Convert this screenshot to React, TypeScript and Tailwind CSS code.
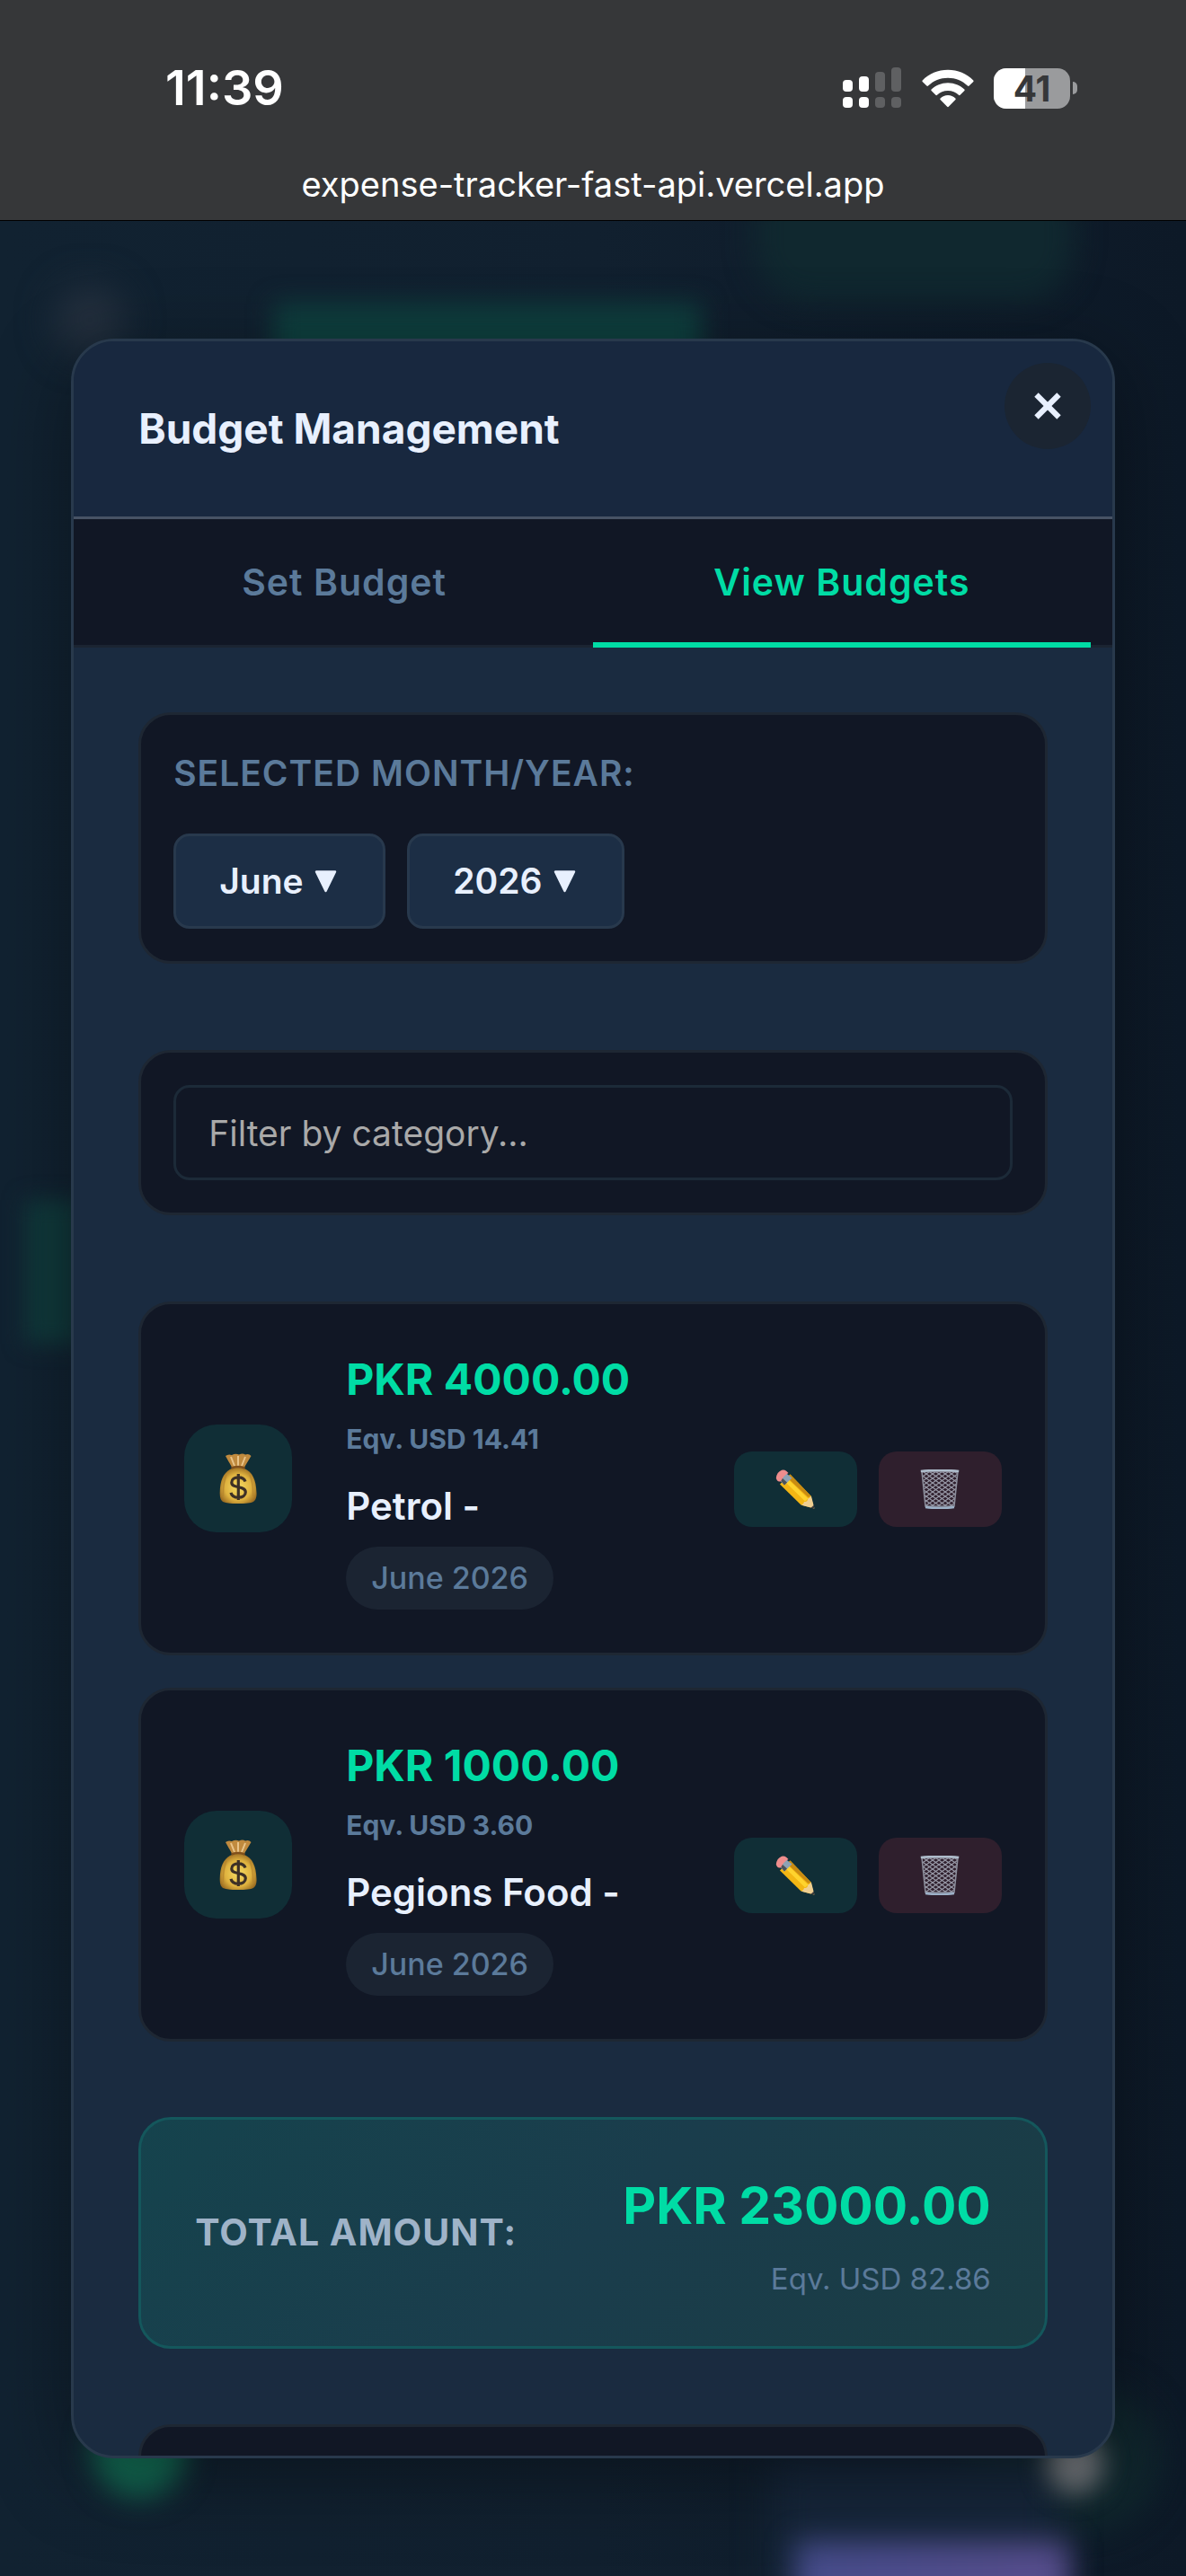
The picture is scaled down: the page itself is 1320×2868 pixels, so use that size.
import React, { useState } from 'react';
import { X } from 'lucide-react';

type Budget = {
  id: number;
  amount: string;
  eqv: string;
  category: string;
  period: string;
};

const BUDGETS: Budget[] = [
  { id: 1, amount: 'PKR 4000.00', eqv: 'Eqv. USD 14.41', category: 'Petrol -', period: 'June 2026' },
  { id: 2, amount: 'PKR 1000.00', eqv: 'Eqv. USD 3.60', category: 'Pegions Food -', period: 'June 2026' },
];

function SignalIcon() {
  return (
    <svg className="w-[66px] h-[46px]" viewBox="0 0 66 46">
      <g fill="#ffffff">
        <rect x="0" y="14" width="11" height="13" rx="4" />
        <rect x="18" y="10" width="11" height="17" rx="4" />
        <rect x="0" y="33" width="11" height="12" rx="4" />
        <rect x="18" y="33" width="11" height="12" rx="4" />
      </g>
      <g fill="#5f6062">
        <rect x="36" y="5" width="11" height="22" rx="4" />
        <rect x="54" y="0" width="11" height="27" rx="4" />
        <rect x="36" y="33" width="11" height="12" rx="4" />
        <rect x="54" y="33" width="11" height="12" rx="4" />
      </g>
    </svg>
  );
}

function WifiIcon() {
  return (
    <svg className="w-[58px] h-[43px]" viewBox="0 0 58 43" fill="#ffffff">
      <path d="M0.7 12.5C8 5 18 0.8 29 0.8S50 5 57.3 12.5Q58 13.3 57.3 14L52.6 18.6Q51.8 19.4 51 18.6C45.2 12.9 37.5 9.7 29 9.7S12.8 12.9 7 18.6Q6.2 19.4 5.4 18.6L0.7 14Q0 13.3 0.7 12.5Z" />
      <path d="M10.6 22.6C15.3 18 21.8 15.2 29 15.2S42.7 18 47.4 22.6Q48.1 23.4 47.4 24.1L42.6 28.8Q41.8 29.5 41 28.8C37.9 25.8 33.7 24 29 24S20.1 25.8 17 28.8Q16.2 29.5 15.4 28.8L10.6 24.1Q9.9 23.4 10.6 22.6Z" />
      <path d="M20.6 32.5C22.8 30.4 25.8 29.1 29 29.1S35.2 30.4 37.4 32.5Q38.2 33.3 37.4 34.1L29.8 41.8Q29 42.5 28.2 41.8L20.6 34.1Q19.8 33.3 20.6 32.5Z" />
    </svg>
  );
}

function Battery({ level }: { level: number }) {
  return (
    <div className="flex items-center gap-[3px]">
      <div className="relative flex h-[45px] w-[85px] items-center justify-center rounded-[14px] bg-[#9a9b9d]">
        <div className="absolute inset-y-0 left-0 rounded-l-[14px] bg-white" style={{ width: `${level}%` }} />
        <span className="relative text-[39px] font-bold leading-[45px] text-[#363739]">{level}</span>
      </div>
      <div className="w-[5px] h-[14px] rounded-r-full bg-[#9a9b9d]" />
    </div>
  );
}

function MoneyBag() {
  return (
    <svg className="w-[42px] h-[56px]" viewBox="0 0 42 56">
      <defs>
        <radialGradient id="bag" cx="0.5" cy="0.55" r="0.6">
          <stop offset="0" stopColor="#f6dc62" />
          <stop offset="0.6" stopColor="#dfb23f" />
          <stop offset="1" stopColor="#8f5f1c" />
        </radialGradient>
      </defs>
      <path d="M7 3Q10 0.5 14 2Q18 0 22 1.5Q26-0.5 29 1.5Q33 0 35.5 3L28 15.5H14Z" fill="#c08a3e" />
      <path d="M13 4L17 14M21 3V14M29 4L25 14" stroke="#e9c489" strokeWidth="2" fill="none" />
      <path d="M14 17Q21 14 28 17C37 21 41 29 41.5 44Q42 51 38 54Q34 56 21 56T4 54Q0.5 52 0.7 44C1 29 5 21 14 17Z" fill="url(#bag)" />
      <path d="M8 24Q4 34 4.5 48M34 24Q38 34 37.5 48" stroke="#b5832c" strokeWidth="1.5" fill="none" opacity="0.7" />
      <path d="M13.5 16.5Q21 13.5 28.5 16.5" stroke="#80501c" strokeWidth="2.5" fill="none" />
      <path d="M29 31.5C28 28 25 26.8 21.3 26.8C17 26.8 13.8 29 13.8 32.4C13.8 40 29.3 35.5 29.3 43.3C29.3 47 26 49.2 21.3 49.2C17 49.2 13.8 47.3 13 43.8M21.3 23V52" stroke="#3d3026" strokeWidth="3.2" fill="none" />
    </svg>
  );
}

function Pencil() {
  return (
    <svg className="w-[44px] h-[44px]" viewBox="0 0 44 44">
      <path d="M16.5 5.5L39.5 29.5L43 43.5L28.5 39.5L5 16.5Z" fill="#f3b614" />
      <path d="M16.5 5.5L39.5 29.5L36.5 31L12.5 8.5Z" fill="#c98b12" />
      <path d="M12.8 9.5L36.5 32.5L33 35.5L9.5 12.5Z" fill="#ffd32e" />
      <path d="M39.8 29.2L43.5 43.5L29 39.8Q31.5 39 32 36Q36 36 36.3 32.4Q39 32 39.8 29.2Z" fill="#efcf92" />
      <path d="M42.4 39L43.7 43.7L38.8 42.4Q42 42 42.4 39Z" fill="#3b3a3c" />
      <path d="M10.5 3L18.5 9.5L10 17.5L3 10.5Z" fill="#8da2b5" />
      <path d="M5.5 12L10 17.5L13 14.6L7 9Z" fill="#4d5258" />
      <path d="M10.5 0.8Q12.5 1.5 14.5 4Q9.5 6.5 6 13.2Q2 14.5 0.8 9.8Q1.5 3 7 0.8Q8.8 0 10.5 0.8Z" fill="#ee8d8d" />
    </svg>
  );
}

function Trash() {
  return (
    <svg className="w-[44px] h-[44px]" viewBox="0 0 44 44">
      <defs>
        <pattern id="mesh" width="7" height="5" patternUnits="userSpaceOnUse">
          <path d="M0 0L7 5M7 0L0 5" stroke="#9a9ba9" strokeWidth="1.1" />
        </pattern>
      </defs>
      <path d="M2 2.5L6 41H38L42 2.5Z" fill="url(#mesh)" stroke="#8b8d9b" strokeWidth="1.5" />
      <path d="M0.8 2Q22-0.5 43.2 2" stroke="#aebccb" strokeWidth="2.4" fill="none" />
      <path d="M6 42Q22 44 38 42" stroke="#9db1c8" strokeWidth="2.6" fill="none" />
    </svg>
  );
}

// Blurred remains of the dashboard that sits behind the modal
function Backdrop() {
  return (
    <div className="absolute inset-0 overflow-hidden bg-linear-to-r from-[#112231] via-[#11202f] to-[#0d1927]" aria-hidden="true">
      <div className="absolute left-[840px] -top-[60px] w-[355px] h-[150px] rounded-[60px] bg-[#10282f] blur-[16px]" />
      <div className="absolute left-[60px] top-[70px] w-[80px] h-[80px] rounded-full bg-[#232f3d] blur-[20px]" />
      <div className="absolute left-[305px] top-[92px] w-[475px] h-[70px] bg-[#0e3f3e] blur-[14px]" />
      <div className="absolute left-[28px] top-[1090px] w-[60px] h-[160px] bg-[#10393b] blur-[12px]" />
      <div className="absolute right-[30px] bottom-[50px] w-[220px] h-[160px] rounded-full bg-[#10272d] blur-[20px]" />
      <div className="absolute right-[140px] -bottom-[20px] w-[320px] h-[150px] bg-[#16263a] blur-[20px]" />
      <div className="absolute left-[103px] bottom-[88px] w-[104px] h-[104px] rounded-full bg-[#136c54] blur-[16px]" />
      <div className="absolute right-[92px] bottom-[92px] w-[64px] h-[66px] rounded-full bg-[#71757a] blur-[14px]" />
      <div className="absolute right-[130px] -bottom-[60px] w-[304px] h-[98px] bg-linear-to-r from-[#454c8a] to-[#574d8c] blur-[16px]" />
    </div>
  );
}

function PeriodSelect({ label, options }: { label: string; options: string[] }) {
  return (
    <div className="relative">
      <select
        aria-label={label}
        className="h-[106px] appearance-none rounded-[18px] border-3 border-[#28394d] bg-[#1c2e45] pl-12 pr-[88px] text-[39px] font-semibold text-[#e8f0fe]"
      >
        {options.map((o) => (
          <option key={o}>{o}</option>
        ))}
      </select>
      <svg className="pointer-events-none absolute right-[54px] top-[41px] w-[25px] h-[25px]" viewBox="0 0 25 25">
        <path d="M2 1.5H23L12.5 23Z" fill="#e8f0fe" stroke="#e8f0fe" strokeWidth="2.5" strokeLinejoin="round" />
      </svg>
    </div>
  );
}

function BudgetCard({ budget }: { budget: Budget }) {
  return (
    <li className="flex items-center rounded-[36px] border-3 border-[#1e2733] bg-[#111725] px-12 h-[394px]">
      <div className="flex size-[120px] shrink-0 items-center justify-center rounded-[36px] bg-[#102e36]">
        <MoneyBag />
      </div>
      <div className="ml-[60px] flex flex-1 flex-col items-start">
        <p className="text-[48px] leading-[72px] font-bold text-[#00dca5]">{budget.amount}</p>
        <p className="text-[30px] leading-[60px] font-bold text-[#5b7a9a]">{budget.eqv}</p>
        <p className="mt-3 text-[42px] leading-[66px] font-semibold text-[#e8f0fe]">{budget.category}</p>
        <span className="mt-3 rounded-full bg-[#1b2432] px-7 text-[34px] leading-[70px] font-medium text-[#5b7a9a]">
          {budget.period}
        </span>
      </div>
      <div className="mt-6 flex gap-6">
        <button aria-label="Edit budget" className="flex h-[84px] w-[137px] items-center justify-center rounded-[20px] bg-[#102e36]">
          <Pencil />
        </button>
        <button aria-label="Delete budget" className="flex h-[84px] w-[137px] items-center justify-center rounded-[20px] bg-[#2f1f2d]">
          <Trash />
        </button>
      </div>
    </li>
  );
}

export default function App() {
  const [tab, setTab] = useState<'set' | 'view'>('view');
  const [filter, setFilter] = useState('');

  const tabClass = (active: boolean) =>
    active
      ? 'flex-1 border-b-6 border-[#00dca5] pt-1 text-[41px] font-semibold tracking-[1px] text-[#00dca5]'
      : 'flex-1 border-b-6 border-transparent pt-1 text-[41px] font-semibold tracking-[1px] text-[#5b7a9a]';

  return (
    <div className="flex h-screen flex-col font-[Inter,'Liberation_Sans',sans-serif]">
      <header className="h-[246px] shrink-0 border-b border-black bg-[#363739] text-white">
        <div className="flex items-center justify-between pt-[67px] pr-[121px] pl-[184px]">
          <span className="text-[54px] leading-[62px] font-semibold">11:39</span>
          <div className="flex items-center gap-[22px]">
            <SignalIcon />
            <WifiIcon />
            <Battery level={41} />
          </div>
        </div>
        <p className="pt-[50px] text-center text-[38px] leading-[52px]">expense-tracker-fast-api.vercel.app</p>
      </header>

      <main className="relative flex min-h-0 flex-1 items-center justify-center">
        <Backdrop />

        <div
          role="dialog"
          aria-labelledby="dialog-title"
          className="relative flex h-[90%] w-[88%] flex-col overflow-hidden rounded-[48px] border-3 border-[#28394c] bg-[#1a2b40] shadow-[0_20px_90px_rgba(0,0,0,0.38)]"
        >
          <div className="flex h-[198px] shrink-0 items-center border-b-3 border-[#475365] bg-[#18283f] px-[72px]">
            <h2 id="dialog-title" className="text-[46px] font-bold text-[#e8f0fe]">Budget Management</h2>
            <button
              aria-label="Close"
              className="absolute top-6 right-6 flex size-24 items-center justify-center rounded-full bg-[#1b2532] text-[#e8f0fe]"
            >
              <X size={50} strokeWidth={3} strokeLinecap="butt" />
            </button>
          </div>

          <div className="flex h-[143px] shrink-0 bg-[#111725] px-6 shadow-[inset_0_-3px_0_#1b2432]">
            <button className={tabClass(tab === 'set')} onClick={() => setTab('set')}>Set Budget</button>
            <button className={tabClass(tab === 'view')} onClick={() => setTab('view')}>View Budgets</button>
          </div>

          <div className="min-h-0 flex-1 overflow-hidden p-[72px]">
            <section className="rounded-[36px] border-3 border-[#1e2733] bg-[#111725] p-9">
              <h3 className="text-[39px] leading-[58px] font-semibold tracking-[1px] text-[#5b7a9a]">SELECTED MONTH/YEAR:</h3>
              <div className="mt-[38px] flex gap-6">
                <PeriodSelect label="Month" options={['June', 'July', 'May']} />
                <PeriodSelect label="Year" options={['2026', '2025', '2024']} />
              </div>
            </section>

            <section className="mt-24 rounded-[36px] border-3 border-[#1e2733] bg-[#111725] p-9">
              <input
                type="text"
                aria-label="Filter by category"
                placeholder="Filter by category..."
                value={filter}
                onChange={(e) => setFilter(e.target.value)}
                className="block h-[106px] w-full rounded-[18px] border-3 border-[#1c2a38] bg-transparent px-9 text-[39px] text-[#e8f0fe] placeholder:text-[#a9a9a9]"
              />
            </section>

            <ul className="mt-24 flex flex-col gap-9">
              {BUDGETS.map((b) => (
                <BudgetCard key={b.id} budget={b} />
              ))}
            </ul>

            <section className="mt-[84px] flex h-[258px] items-center justify-between rounded-[36px] border-3 border-[#14575c] bg-linear-135 from-[#15434d] via-[#1a3d4c] to-[#1a3c44] px-[60px]">
              <span className="text-[41px] font-bold tracking-[1px] text-[#9fb3c8]">TOTAL AMOUNT:</span>
              <div className="text-right">
                <p className="text-[57px] leading-[102px] font-bold text-[#00dca5]">PKR 23000.00</p>
                <p className="text-[33px] leading-[60px] text-[#5b7a9a]">Eqv. USD 82.86</p>
              </div>
            </section>

            <section className="mt-[84px] h-[280px] rounded-[36px] border-3 border-[#1e2733] bg-[#111725]" />
          </div>
        </div>
      </main>
    </div>
  );
}
